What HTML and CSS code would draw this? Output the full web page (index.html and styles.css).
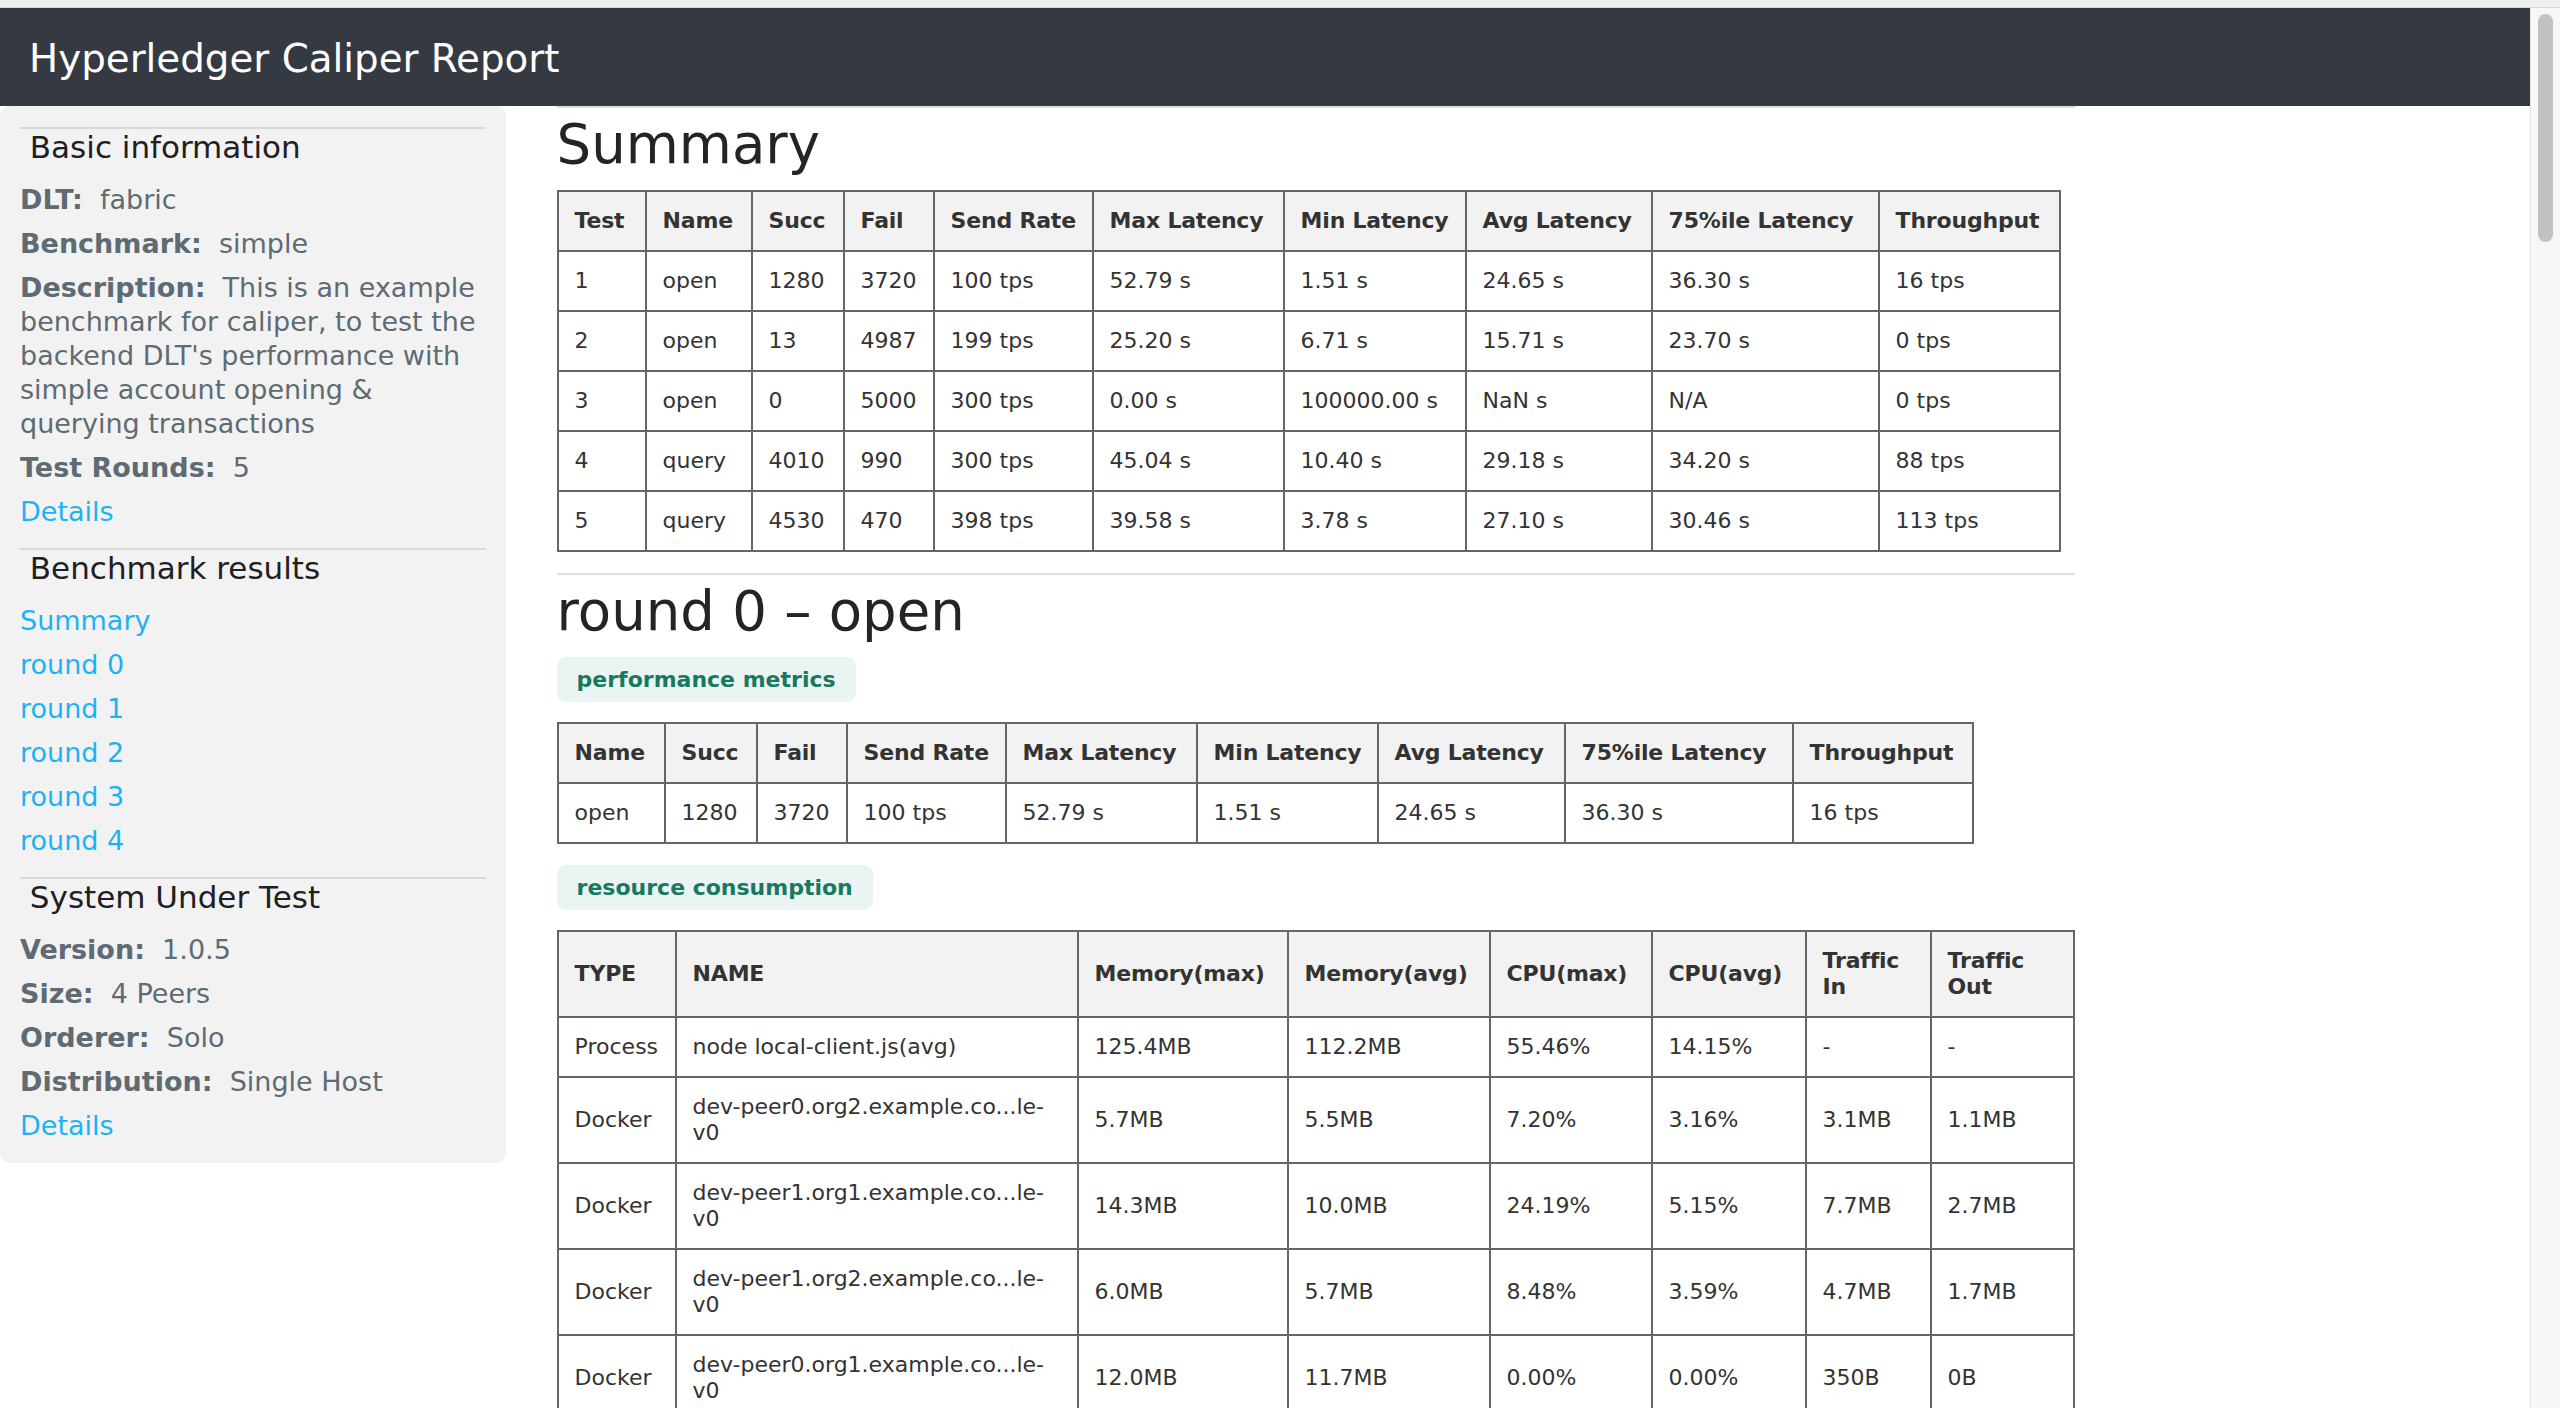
FILE: index.html
```html
<!DOCTYPE html>
<html lang="en">
<head>
<meta charset="utf-8">
<title>Hyperledger Caliper Report</title>
<link rel="stylesheet" href="styles.css">
</head>
<body>
<div class="chrome-top"></div>
<div class="window">
  <div class="page">
    <header class="topbar">
      <h1>Hyperledger Caliper Report</h1>
    </header>
    <div class="layout">
      <aside class="sidebar">
        <div class="side-section">
          <h3>&nbsp;Basic information</h3>
          <ul>
            <li><b>DLT:</b>&nbsp; fabric</li>
            <li><b>Benchmark:</b>&nbsp; simple</li>
            <li><b>Description:</b>&nbsp; This is an example benchmark for caliper, to test the backend DLT's performance with simple account opening &amp; querying transactions</li>
            <li><b>Test Rounds:</b>&nbsp; 5</li>
            <li><a href="#benchmarkInfo">Details</a></li>
          </ul>
        </div>
        <div class="side-section">
          <h3>&nbsp;Benchmark results</h3>
          <ul>
            <li><a href="#summary">Summary</a></li>
            <li><a href="#round0">round 0</a></li>
            <li><a href="#round1">round 1</a></li>
            <li><a href="#round2">round 2</a></li>
            <li><a href="#round3">round 3</a></li>
            <li><a href="#round4">round 4</a></li>
          </ul>
        </div>
        <div class="side-section">
          <h3>&nbsp;System Under Test</h3>
          <ul>
            <li><b>Version:</b>&nbsp; 1.0.5</li>
            <li><b>Size:</b>&nbsp; 4 Peers</li>
            <li><b>Orderer:</b>&nbsp; Solo</li>
            <li><b>Distribution:</b>&nbsp; Single Host</li>
            <li><a href="#sutdetails">Details</a></li>
          </ul>
        </div>
      </aside>

      <main class="content">
        <section class="report-section" id="summary">
          <h2>Summary</h2>
          <table class="data t-summary">
            <colgroup>
              <col class="w-test"><col class="w-name"><col class="w-succ"><col class="w-fail"><col class="w-rate">
              <col class="w-max"><col class="w-min"><col class="w-avg"><col class="w-p75"><col class="w-thr">
            </colgroup>
            <tr><th>Test</th><th>Name</th><th>Succ</th><th>Fail</th><th>Send Rate</th><th>Max Latency</th><th>Min Latency</th><th>Avg Latency</th><th>75%ile Latency</th><th>Throughput</th></tr>
            <tr><td>1</td><td>open</td><td>1280</td><td>3720</td><td>100 tps</td><td>52.79 s</td><td>1.51 s</td><td>24.65 s</td><td>36.30 s</td><td>16 tps</td></tr>
            <tr><td>2</td><td>open</td><td>13</td><td>4987</td><td>199 tps</td><td>25.20 s</td><td>6.71 s</td><td>15.71 s</td><td>23.70 s</td><td>0 tps</td></tr>
            <tr><td>3</td><td>open</td><td>0</td><td>5000</td><td>300 tps</td><td>0.00 s</td><td>100000.00 s</td><td>NaN s</td><td>N/A</td><td>0 tps</td></tr>
            <tr><td>4</td><td>query</td><td>4010</td><td>990</td><td>300 tps</td><td>45.04 s</td><td>10.40 s</td><td>29.18 s</td><td>34.20 s</td><td>88 tps</td></tr>
            <tr><td>5</td><td>query</td><td>4530</td><td>470</td><td>398 tps</td><td>39.58 s</td><td>3.78 s</td><td>27.10 s</td><td>30.46 s</td><td>113 tps</td></tr>
          </table>
        </section>

        <section class="report-section" id="round0">
          <h2>round 0 – open</h2>
          <div class="tag">performance metrics</div>
          <table class="data t-perf">
            <colgroup>
              <col class="p-name"><col class="p-succ"><col class="p-fail"><col class="p-rate"><col class="p-max">
              <col class="p-min"><col class="p-avg"><col class="p-p75"><col class="p-thr">
            </colgroup>
            <tr><th>Name</th><th>Succ</th><th>Fail</th><th>Send Rate</th><th>Max Latency</th><th>Min Latency</th><th>Avg Latency</th><th>75%ile Latency</th><th>Throughput</th></tr>
            <tr><td>open</td><td>1280</td><td>3720</td><td>100 tps</td><td>52.79 s</td><td>1.51 s</td><td>24.65 s</td><td>36.30 s</td><td>16 tps</td></tr>
          </table>
          <div class="tag">resource consumption</div>
          <table class="data t-res">
            <colgroup>
              <col class="r-type"><col class="r-name"><col class="r-mmax"><col class="r-mavg"><col class="r-cmax">
              <col class="r-cavg"><col class="r-tin"><col class="r-tout">
            </colgroup>
            <tr><th>TYPE</th><th>NAME</th><th>Memory(max)</th><th>Memory(avg)</th><th>CPU(max)</th><th>CPU(avg)</th><th>Traffic In</th><th>Traffic Out</th></tr>
            <tr><td>Process</td><td>node local-client.js(avg)</td><td>125.4MB</td><td>112.2MB</td><td>55.46%</td><td>14.15%</td><td>-</td><td>-</td></tr>
            <tr><td>Docker</td><td>dev-peer0.org2.example.co...le-v0</td><td>5.7MB</td><td>5.5MB</td><td>7.20%</td><td>3.16%</td><td>3.1MB</td><td>1.1MB</td></tr>
            <tr><td>Docker</td><td>dev-peer1.org1.example.co...le-v0</td><td>14.3MB</td><td>10.0MB</td><td>24.19%</td><td>5.15%</td><td>7.7MB</td><td>2.7MB</td></tr>
            <tr><td>Docker</td><td>dev-peer1.org2.example.co...le-v0</td><td>6.0MB</td><td>5.7MB</td><td>8.48%</td><td>3.59%</td><td>4.7MB</td><td>1.7MB</td></tr>
            <tr><td>Docker</td><td>dev-peer0.org1.example.co...le-v0</td><td>12.0MB</td><td>11.7MB</td><td>0.00%</td><td>0.00%</td><td>350B</td><td>0B</td></tr>
          </table>
        </section>
      </main>
    </div>
  </div>
  <div class="scrollbar"><div class="thumb"></div></div>
</div>
</body>
</html>
```

FILE: styles.css
```css
* { box-sizing: border-box; }

html, body {
  margin: 0;
  height: 100%;
  overflow: hidden;
}

body {
  font-family: "DejaVu Sans", Verdana, sans-serif;
  background: #ffffff;
  color: #212529;
}

.chrome-top {
  height: 8px;
  background: #efefef;
  border-bottom: 1px solid #d9d9d9;
}

.window {
  display: flex;
  height: 1400px;
}

.page {
  flex: 1;
  min-width: 0;
}

.scrollbar {
  width: 30px;
  background: #f7f7f7;
  border-left: 1px solid #e4e4e4;
  padding: 6px 0 0 7px;
}

.thumb {
  width: 15px;
  height: 228px;
  border-radius: 8px;
  background: #c1c1c1;
}

/* header */
.topbar {
  height: 98px;
  background: #353a42;
  padding: 28px 0 0 29px;
}

.topbar h1 {
  margin: 0;
  font-size: 38.8px;
  line-height: 45px;
  font-weight: 400;
  color: #ffffff;
}

.layout {
  display: flex;
  align-items: flex-start;
}

/* sidebar */
.sidebar {
  width: 20%;
  background: #f2f2f2;
  border-radius: 10px;
  padding: 21px 20px 1px;
}

.side-section {
  border-top: 2px solid #d9d9d9;
  padding-bottom: 9px;
}

.side-section h3 {
  margin: 0 0 18px;
  font-size: 31px;
  line-height: 36px;
  font-weight: 400;
  color: #1e2023;
}

.side-section ul {
  list-style: none;
  margin: 0;
  padding: 0;
}

.side-section li {
  font-size: 27px;
  line-height: 34px;
  color: #5e6b73;
  margin-bottom: 10px;
}

.side-section b {
  font-weight: 700;
}

.side-section a {
  color: #1cb2f6;
  text-decoration: none;
}

/* main column */
.content {
  width: 60%;
  margin-left: 2%;
}

.report-section {
  border-top: 2px solid #dedede;
  padding-top: 5px;
}

.report-section h2 {
  margin: 0 0 14px;
  font-size: 54.5px;
  line-height: 63px;
  font-weight: 400;
  color: #212529;
}

.tag {
  width: fit-content;
  padding: 10px 20px;
  margin-bottom: 20px;
  border-radius: 9px;
  background: #eaf4f3;
  color: #177a60;
  font-size: 22px;
  line-height: 25px;
  font-weight: 700;
}

/* tables */
.data {
  border-collapse: collapse;
  table-layout: fixed;
  font-size: 22px;
  line-height: 26px;
  color: #333333;
  margin-bottom: 21px;
}

.data th,
.data td {
  border: 2px solid #666666;
  padding: 16px;
  text-align: left;
  vertical-align: middle;
}

.data th {
  background: #f2f2f2;
  font-weight: 700;
  letter-spacing: -0.2px;
}

.t-summary th,
.t-perf th {
  white-space: nowrap;
}

.data td {
  background: #ffffff;
  font-weight: 400;
}

.t-summary { width: 1502px; margin-top: 1px; }
.w-test { width: 88px; }
.w-name { width: 106px; }
.w-succ { width: 92px; }
.w-fail { width: 90px; }
.w-rate { width: 159px; }
.w-max { width: 191px; }
.w-min { width: 182px; }
.w-avg { width: 186px; }
.w-p75 { width: 227px; }
.w-thr { width: 181px; }

.t-perf { width: 1415px; }
.p-name { width: 107px; }
.p-succ { width: 92px; }
.p-fail { width: 90px; }
.p-rate { width: 159px; }
.p-max { width: 191px; }
.p-min { width: 181px; }
.p-avg { width: 187px; }
.p-p75 { width: 228px; }
.p-thr { width: 180px; }

.t-res { width: 1516px; }
.r-type { width: 118px; }
.r-name { width: 402px; }
.r-mmax { width: 210px; }
.r-mavg { width: 202px; }
.r-cmax { width: 162px; }
.r-cavg { width: 154px; }
.r-tin { width: 125px; }
.r-tout { width: 143px; }
```
